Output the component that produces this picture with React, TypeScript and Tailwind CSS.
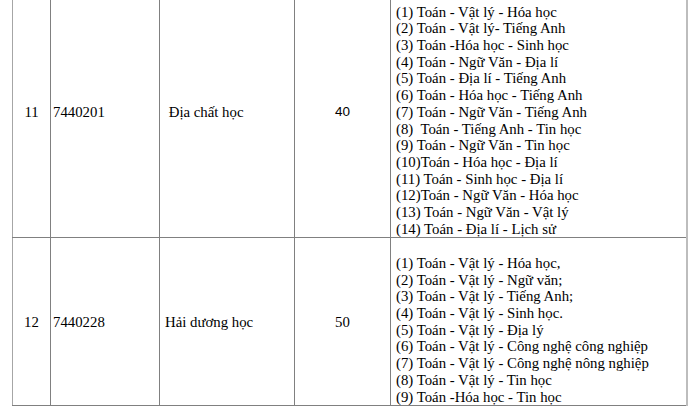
import React from 'react';

interface Row {
  stt: string;
  code: string;
  name: string;
  quota: string;
  quotaFont: string;
  height: string;
  combos: string[];
}

const rows: Row[] = [
  {
    stt: '11',
    code: '7440201',
    name: ' Địa chất học',
    quota: '40',
    quotaFont: "font-['Liberation_Sans',sans-serif] text-[13.5px]",
    height: 'h-[251px]',
    combos: [
      '',
      '(1) Toán - Vật lý - Hóa học',
      '(2) Toán - Vật lý- Tiếng Anh',
      '(3) Toán -Hóa học - Sinh học',
      '(4) Toán - Ngữ Văn - Địa lí',
      '(5) Toán - Địa lí - Tiếng Anh',
      '(6) Toán - Hóa học - Tiếng Anh',
      '(7) Toán - Ngữ Văn - Tiếng Anh',
      '(8)  Toán - Tiếng Anh - Tin học',
      '(9) Toán - Ngữ Văn - Tin học',
      '(10)Toán - Hóa học - Địa lí',
      '(11) Toán - Sinh học - Địa lí',
      '(12)Toán - Ngữ Văn - Hóa học',
      '(13) Toán - Ngữ Văn - Vật lý',
      '(14) Toán - Địa lí - Lịch sử',
    ],
  },
  {
    stt: '12',
    code: '7440228',
    name: 'Hải dương học',
    quota: '50',
    quotaFont: '',
    height: 'h-[167px]',
    combos: [
      '',
      '(1) Toán - Vật lý - Hóa học,',
      '(2) Toán - Vật lý - Ngữ văn;',
      '(3) Toán - Vật lý - Tiếng Anh;',
      '(4) Toán - Vật lý - Sinh học.',
      '(5) Toán - Vật lý - Địa lý',
      '(6) Toán - Vật lý - Công nghệ công nghiệp',
      '(7) Toán - Vật lý - Công nghệ nông nghiệp',
      '(8) Toán - Vật lý - Tin học',
      '(9) Toán -Hóa học - Tin học',
    ],
  },
];

const cell = 'border border-[#808080] align-middle p-0';

const App: React.FC = () => {
  return (
    <div className="w-[698px] h-[408px] overflow-hidden bg-white text-black font-['Liberation_Serif',serif] text-[14.8px]">
      <table className="table-fixed border-collapse ml-[12px] -mt-[14px] w-[674px]">
        <colgroup>
          <col className="w-[38px]" />
          <col className="w-[109px]" />
          <col className="w-[135px]" />
          <col className="w-[96px]" />
          <col className="w-[296px]" />
        </colgroup>
        <tbody>
          {rows.map((r) => (
            <tr key={r.stt} className={r.height}>
              <td className={`${cell} border-l-[#a6a6a6] text-center`}>{r.stt}</td>
              <td className={`${cell} pl-[2px]`}>{r.code}</td>
              <td className={`${cell} pl-[5px] whitespace-pre`}>{r.name}</td>
              <td className={`${cell} text-center ${r.quotaFont}`}>{r.quota}</td>
              <td className={`${cell} border-r-2 border-r-[#bdbdbd] pl-[5px]`}>
                {r.combos.map((c, i) => (
                  <div key={i} className="leading-[16.7px] h-[16.7px] whitespace-pre">
                    {c}
                  </div>
                ))}
              </td>
            </tr>
          ))}
        </tbody>
      </table>
    </div>
  );
};

export default App;
